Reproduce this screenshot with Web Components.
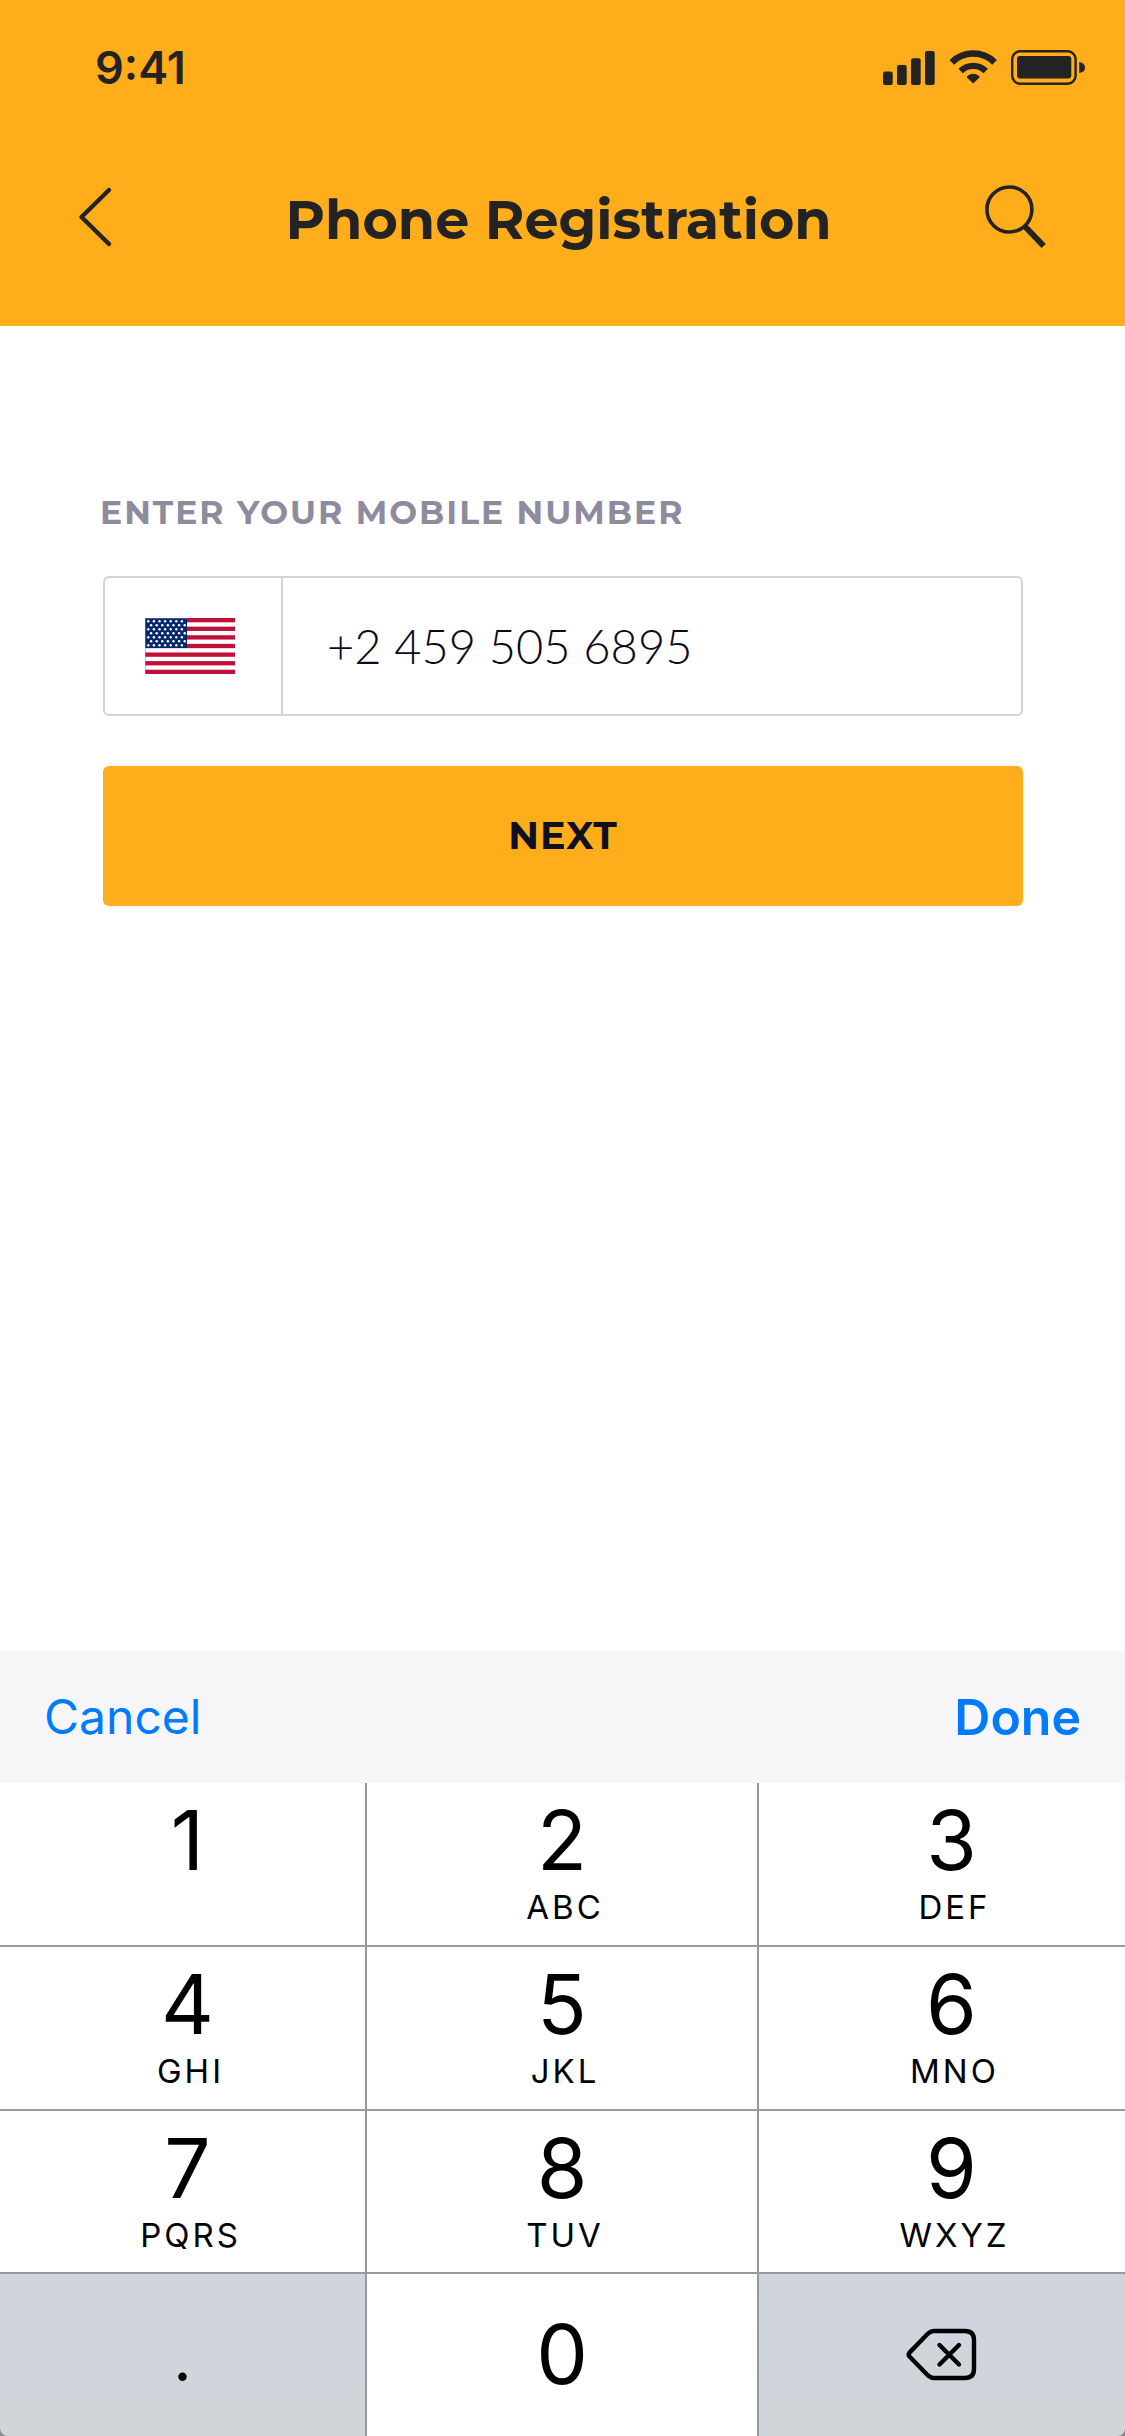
<!DOCTYPE html>
<html lang="en">
<head>
<meta charset="utf-8">
<meta name="viewport" content="width=device-width, initial-scale=1">
<title>Phone Registration</title>
<style>
  html, body { margin: 0; }
  body { background: #fff; font-family: Inter, "Liberation Sans", sans-serif; color: #232323; }
</style>
</head>
<body>
<phone-screen>
  <status-bar slot="top" time="9:41"></status-bar>
  <nav-bar slot="top">Phone Registration</nav-bar>
  <phone-form label="ENTER YOUR MOBILE NUMBER" value="+2 459 505 6895">NEXT</phone-form>
  <number-pad slot="bottom"></number-pad>
</phone-screen>
<script>
const define = (name, html) => customElements.define(name, class extends HTMLElement {
  constructor() {
    super();
    this.attachShadow({ mode: "open" }).innerHTML = html(this);
  }
});

define("phone-screen", () => `
  <style>
    :host { display: flex; flex-direction: column; min-height: 100vh; }
    header { background: #ffad1b; padding-bottom: 66px; }
    main { flex: 1; }
  </style>
  <header><slot name="top"></slot></header>
  <main><slot></slot></main>
  <slot name="bottom"></slot>`);

define("status-bar", el => `
  <style>
    :host { display: flex; justify-content: space-between; align-items: center; padding: 40px 39px 78px 95px; }
    time { font-size: 45px; line-height: 56px; font-weight: 600; }
    svg { display: block; fill: currentColor; }
  </style>
  <time>${el.getAttribute("time")}</time>
  <svg width="203" height="36" viewBox="883 50 203 36" role="img" aria-label="Signal, Wi-Fi and battery">
    <rect x="883" y="71.5" width="9.7" height="13.5" rx="2"/>
    <rect x="897" y="65" width="9.7" height="20" rx="2"/>
    <rect x="911" y="58.3" width="9.7" height="26.7" rx="2"/>
    <rect x="925" y="51" width="9.7" height="34" rx="2"/>
    <g fill="none" stroke="currentColor">
      <path d="M951.8 62.3a30.5 30.5 0 0 1 42.8 0" stroke-width="6.6"/>
      <path d="M960.6 71a18 18 0 0 1 25.2 0" stroke-width="6.2"/>
      <rect x="1012.2" y="51.2" width="63.4" height="32.6" rx="8" stroke-width="2.4"/>
    </g>
    <path d="M973.2 83.6l-6.2-6.2q-.6-.8.3-1.5a10 10 0 0 1 11.8 0q.9.7.3 1.5z"/>
    <rect x="1017" y="56" width="54.3" height="22.6" rx="3"/>
    <path d="M1079.2 62q5.8 1 5.8 5.5t-5.8 5.5z"/>
  </svg>`);

define("nav-bar", () => `
  <style>
    :host { display: flex; justify-content: space-between; align-items: center; padding: 0 72px; }
    h1 { margin: 0; font: 700 54px/80px Montserrat, Inter, sans-serif; padding-top: 6px; }
    button { border: 0; padding: 0; background: none; color: inherit; }
    svg { display: block; fill: none; stroke: currentColor; }
  </style>
  <button type="button" aria-label="Back">
    <svg width="64" height="72" viewBox="72 181 64 72" stroke-width="4.4" stroke-linecap="round" stroke-linejoin="round"><path d="M109 190L81.500 217 109 244"/></svg>
  </button>
  <h1><slot></slot></h1>
  <button type="button" aria-label="Search">
    <svg width="72" height="72" viewBox="981 181 72 72"><circle cx="1009.400" cy="209.500" r="22.500" stroke-width="3.600"/><path d="M1024.500 226L1043.700 246" stroke-width="6"/></svg>
  </button>`);

define("us-flag", () => {
  let stripes = "", stars = "";
  for (let i = 0; i < 7; i++) stripes += `<rect y="${i * 8.62}" width="90" height="4.31"/>`;
  for (let r = 0; r < 7; r++)
    for (let c = 0; c < 7; c++)
      stars += `<circle cx="${3.3 + c * 5.6 + (r % 2 ? 2.8 : 0)}" cy="${3.3 + r * 4}" r="1.2"/>`;
  return `
  <style>:host { display: block; } svg { display: block; }</style>
  <svg width="90" height="56" viewBox="0 0 90 56" role="img" aria-label="United States">
    <rect width="90" height="56" fill="#fff"/>
    <g fill="#c0103a">${stripes}</g>
    <rect width="42" height="30" fill="#05286b"/>
    <g fill="#fff">${stars}</g>
    <path d="M.5 56V.5H42" fill="none" stroke="#8e8e99" stroke-opacity=".5"/>
  </svg>`;
});

define("phone-form", el => `
  <style>
    :host { display: block; padding: 160px 100px; }
    form { display: flex; flex-direction: column; }
    label { font: 700 33px/52px Montserrat, Inter, sans-serif; letter-spacing: 2px; color: #8f8b9f; }
    .field { display: flex; box-sizing: border-box; height: 140px; margin: 38px 2px 0 3px; border: 2px solid #d3d3d3; border-radius: 6px; }
    .country { box-sizing: border-box; width: 178px; padding: 0 6px 0 0; display: flex; align-items: center; justify-content: center; border: 0; border-right: 2px solid #d3d3d3; background: none; }
    input { flex: 1; min-width: 0; border: 0; outline: 0; padding: 0 44px; background: none; color: #0b0820; font: 300 47px/60px Lato, sans-serif; }
    .next { height: 140px; margin: 50px 2px 0 3px; border: 0; border-radius: 6px; background: #ffad1b; color: #0f1020; font: 700 38px/48px Montserrat, Inter, sans-serif; letter-spacing: 1px; }
  </style>
  <form>
    <label for="number">${el.getAttribute("label")}</label>
    <div class="field">
      <button class="country" type="button" aria-label="Country"><us-flag></us-flag></button>
      <input id="number" type="tel" value="${el.getAttribute("value")}">
    </div>
    <button class="next" type="button"><slot></slot></button>
  </form>`);

define("pad-key", el => `
  <style>
    :host { display: flex; background: #fff; }
    :host([muted]) { background: linear-gradient(#d0d4de, #d0d5d9); }
    button { flex: 1; display: flex; flex-direction: column; align-items: center; border: 0; background: none; color: #000; font-family: inherit; padding: 16px 0 0 var(--shift, 0); }
    .digit { font-size: 82px; line-height: 84px; }
    .letters { font-size: 33px; line-height: 40px; letter-spacing: 3px; padding-left: 6px; margin-top: 4px; }
    :host([solo]) button { padding: 0; justify-content: center; }
    ::slotted(.point) { font-size: 64px; line-height: 84px; }
  </style>
  <button type="button"${el.getAttribute("name") ? ` aria-label="${el.getAttribute("name")}"` : ""}>
    <span class="digit"><slot></slot></span>
    ${el.getAttribute("letters") ? `<span class="letters">${el.getAttribute("letters")}</span>` : ""}
  </button>`);

define("number-pad", () => `
  <style>
    :host { display: block; background: #8e8e8e; }
    .bar { display: flex; justify-content: space-between; align-items: center; height: 132px; padding: 0 44px; background: #f6f6f8; }
    .bar button { border: 0; padding: 0; background: none; color: #007aff; font: 400 48px/60px Inter, sans-serif; }
    .bar .done { font-weight: 600; font-size: 50px; }
    .keys { display: grid; grid-template-columns: 365fr 390fr 366fr; grid-template-rows: 162px 162px 161px 162px; gap: 2px; background: #999; border-radius: 0 0 8px 8px; overflow: hidden; }
    pad-key:nth-child(3n+1) { --shift: 10px; }
    pad-key:nth-child(3n) { --shift: 19px; }
    svg { display: block; }
  </style>
  <div class="bar"><button type="button">Cancel</button><button class="done" type="button">Done</button></div>
  <div class="keys">
    <pad-key>1</pad-key><pad-key letters="ABC">2</pad-key><pad-key letters="DEF">3</pad-key>
    <pad-key letters="GHI">4</pad-key><pad-key letters="JKL">5</pad-key><pad-key letters="MNO">6</pad-key>
    <pad-key letters="PQRS">7</pad-key><pad-key letters="TUV">8</pad-key><pad-key letters="WXYZ">9</pad-key>
    <pad-key solo muted><span class="point">.</span></pad-key><pad-key solo>0</pad-key>
    <pad-key solo muted name="Delete"><svg width="72" height="54" viewBox="906 2328 72 54" fill="none" stroke="#000" stroke-width="4.400" stroke-linecap="round" stroke-linejoin="round"><path d="M909.500 2352.600L928 2333.500Q931 2331 934 2331H965Q974 2331 974 2340V2369Q974 2378 965 2378H934Q931 2378 928 2375.500L909.500 2356.500Q907.800 2354.500 909.500 2352.600Z"/><path d="M939.500 2345L959 2364.500M959 2345L939.500 2364.500"/></svg></pad-key>
  </div>`);
</script>
</body>
</html>
